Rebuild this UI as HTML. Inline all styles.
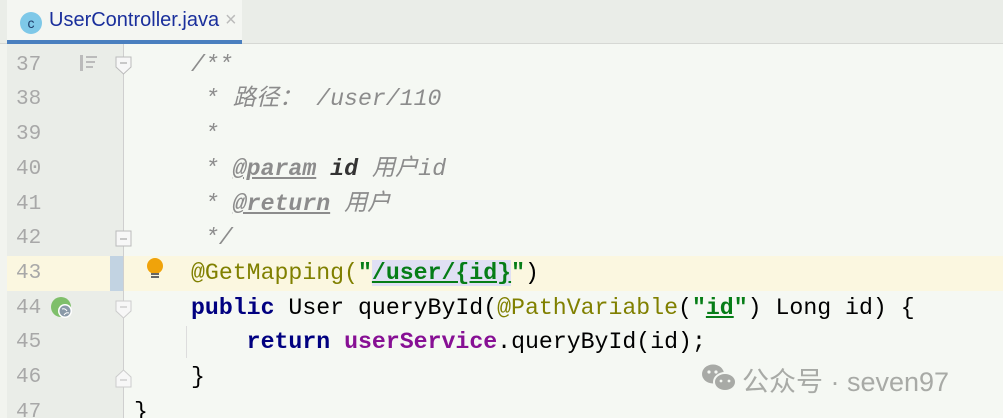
<!DOCTYPE html>
<html><head><meta charset="utf-8"><style>
html,body{margin:0;width:1003px;height:418px;overflow:hidden}
body{background:#f5f8f3;position:relative;font-family:"Liberation Mono","Noto Sans CJK SC",monospace}
.tabbar{position:absolute;left:0;top:0;width:1003px;height:43px;background:#eaede8;border-bottom:1px solid #d6d8d4}
.tab{position:absolute;left:7px;top:0;width:235px;height:44px;background:#f4f6f2;border-bottom:4px solid #4a7fbf;box-sizing:border-box}
.tab .ic{position:absolute;left:13px;top:12px;width:22px;height:22px;border-radius:50%;background:#7ec8e8;color:#1d3d6a;font:14px "Liberation Sans",sans-serif;text-align:center;line-height:22px}
.tab .t{position:absolute;left:42px;top:9px;font:20px "Liberation Sans",sans-serif;color:#1a2f9c}
.tab .x{position:absolute;left:218px;top:9px;font:20px "Liberation Sans",sans-serif;color:#bbb}
.gut{position:absolute;left:7px;top:44px;width:116px;height:374px;background:#eaede8}
.lstrip{position:absolute;left:0;top:44px;width:7px;height:374px;background:#f2f4ef}
.fold{position:absolute;left:123px;top:44px;width:1px;height:374px;background:#cfcfcf}
.row{position:absolute;left:0;height:35px;line-height:35px;font-size:23.2px;white-space:pre}
.num{position:absolute;left:16px;font-size:21px;color:#a8a8a8}
.code{position:absolute;left:191px}
.hl{position:absolute;left:7px;top:256px;width:996px;height:35px;background:#fbf7e0}
.hlg{position:absolute;left:110px;top:256px;width:13px;height:35px;background:#c2d3e2}
.c{color:#8c8c8c;font-style:italic}
.tag{color:#8c8c8c;font-weight:bold;text-decoration:underline;font-style:italic}
.kw{color:#000080;font-weight:bold}
.str{color:#067d17;font-weight:bold}
.ann{color:#808000}
.fld{color:#871094;font-weight:bold}
.wm{position:absolute;left:742px;top:360px;font:27px "Liberation Sans","Noto Sans CJK SC",sans-serif;color:#a8aaa6}
</style></head><body>
<div class="tabbar"><div class="tab"><div class="ic">c</div><div class="t">UserController.java</div><div class="x">×</div></div></div>
<div class="lstrip"></div><div class="gut"></div>
<div class="hl"></div><div class="hlg"></div>
<div class="fold"></div>
<div style="position:absolute;left:186px;top:326px;width:1px;height:32px;background:#ddd"></div>
<div class="row" style="top:48px"><span class="num">37</span><span class="code c">/**</span></div>
<div class="row" style="top:82px"><span class="num">38</span><span class="code c"> * 路径： /user/110</span></div>
<div class="row" style="top:117px"><span class="num">39</span><span class="code c"> *</span></div>
<div class="row" style="top:152px"><span class="num">40</span><span class="code c"> * <span class="tag">@param</span> <b style="color:#333;font-style:italic">id</b> 用户id</span></div>
<div class="row" style="top:187px"><span class="num">41</span><span class="code c"> * <span class="tag">@return</span> 用户</span></div>
<div class="row" style="top:221px"><span class="num">42</span><span class="code c"> */</span></div>
<div class="row" style="top:256px"><span class="num">43</span><span class="code"><span class="ann">@GetMapping(</span><span class="str">"<span style="background:#e0e0f4;text-decoration:underline">/user/{id}</span>"</span><span>)</span></span></div>
<div class="row" style="top:291px"><span class="num">44</span><span class="code"><span class="kw">public</span> User queryById(<span class="ann">@PathVariable</span>(<span class="str">"<u>id</u>"</span>) Long id) {</span></div>
<div class="row" style="top:325px"><span class="num">45</span><span class="code">    <span class="kw">return</span> <span class="fld">userService</span>.queryById(id);</span></div>
<div class="row" style="top:360px"><span class="num">46</span><span class="code">}</span></div>
<div class="row" style="top:395px"><span class="num">47</span><span class="code" style="left:134px">}</span></div>
<div style="position:absolute;left:80px;top:55px;width:3px;height:16px;background:#bbb"></div>
<div style="position:absolute;left:86px;top:56px;width:11px;height:2px;background:#bbb"></div>
<div style="position:absolute;left:86px;top:61px;width:9px;height:2px;background:#bbb"></div>
<div style="position:absolute;left:86px;top:66px;width:7px;height:2px;background:#bbb"></div>
<svg style="position:absolute;left:115px;top:56px" width="17" height="20"><path d="M1 1H16V11L8.5 18L1 11Z" fill="#f7f7f7" stroke="#bbb"/><path d="M5 7H12" stroke="#999"/></svg>
<svg style="position:absolute;left:115px;top:230px" width="17" height="17"><rect x="1" y="1" width="15" height="15" fill="#f7f7f7" stroke="#bbb"/><path d="M5 9H12" stroke="#999"/></svg>
<svg style="position:absolute;left:115px;top:300px" width="17" height="20"><path d="M1 1H16V11L8.5 18L1 11Z" fill="#f7f7f7" stroke="#ccc"/><path d="M5 7H12" stroke="#bbb"/></svg>
<svg style="position:absolute;left:115px;top:368px" width="17" height="20"><path d="M1 19H16V9L8.5 2L1 9Z" fill="#f7f7f7" stroke="#ccc"/><path d="M5 12H12" stroke="#bbb"/></svg>
<svg style="position:absolute;left:50px;top:296px" width="24" height="24"><circle cx="11" cy="11" r="10" fill="#7fbf6a"/><circle cx="15" cy="15" r="7" fill="#fff"/><circle cx="15" cy="15" r="5.5" fill="#8a9aa8"/><path d="M12 13Q15 12 17 15M14 19Q16 16 19 17" stroke="#fff" fill="none"/></svg>
<svg style="position:absolute;left:145px;top:257px" width="20" height="26"><circle cx="10" cy="9" r="8" fill="#f0a30a"/><rect x="6" y="16" width="8" height="2" fill="#666"/><rect x="6" y="19" width="8" height="2" fill="#666"/></svg>
<svg style="position:absolute;left:700px;top:362px" width="40" height="32"><ellipse cx="13" cy="12" rx="11" ry="9.5" fill="#a8aaa6"/><ellipse cx="25" cy="20" rx="11" ry="9" fill="#a8aaa6" stroke="#f5f8f3" stroke-width="2"/><circle cx="9" cy="10" r="1.6" fill="#f5f8f3"/><circle cx="16" cy="10" r="1.6" fill="#f5f8f3"/><circle cx="21" cy="19" r="1.4" fill="#f5f8f3"/><circle cx="29" cy="19" r="1.4" fill="#f5f8f3"/></svg>
<div class="wm">公众号 · seven97</div>
</body></html>
